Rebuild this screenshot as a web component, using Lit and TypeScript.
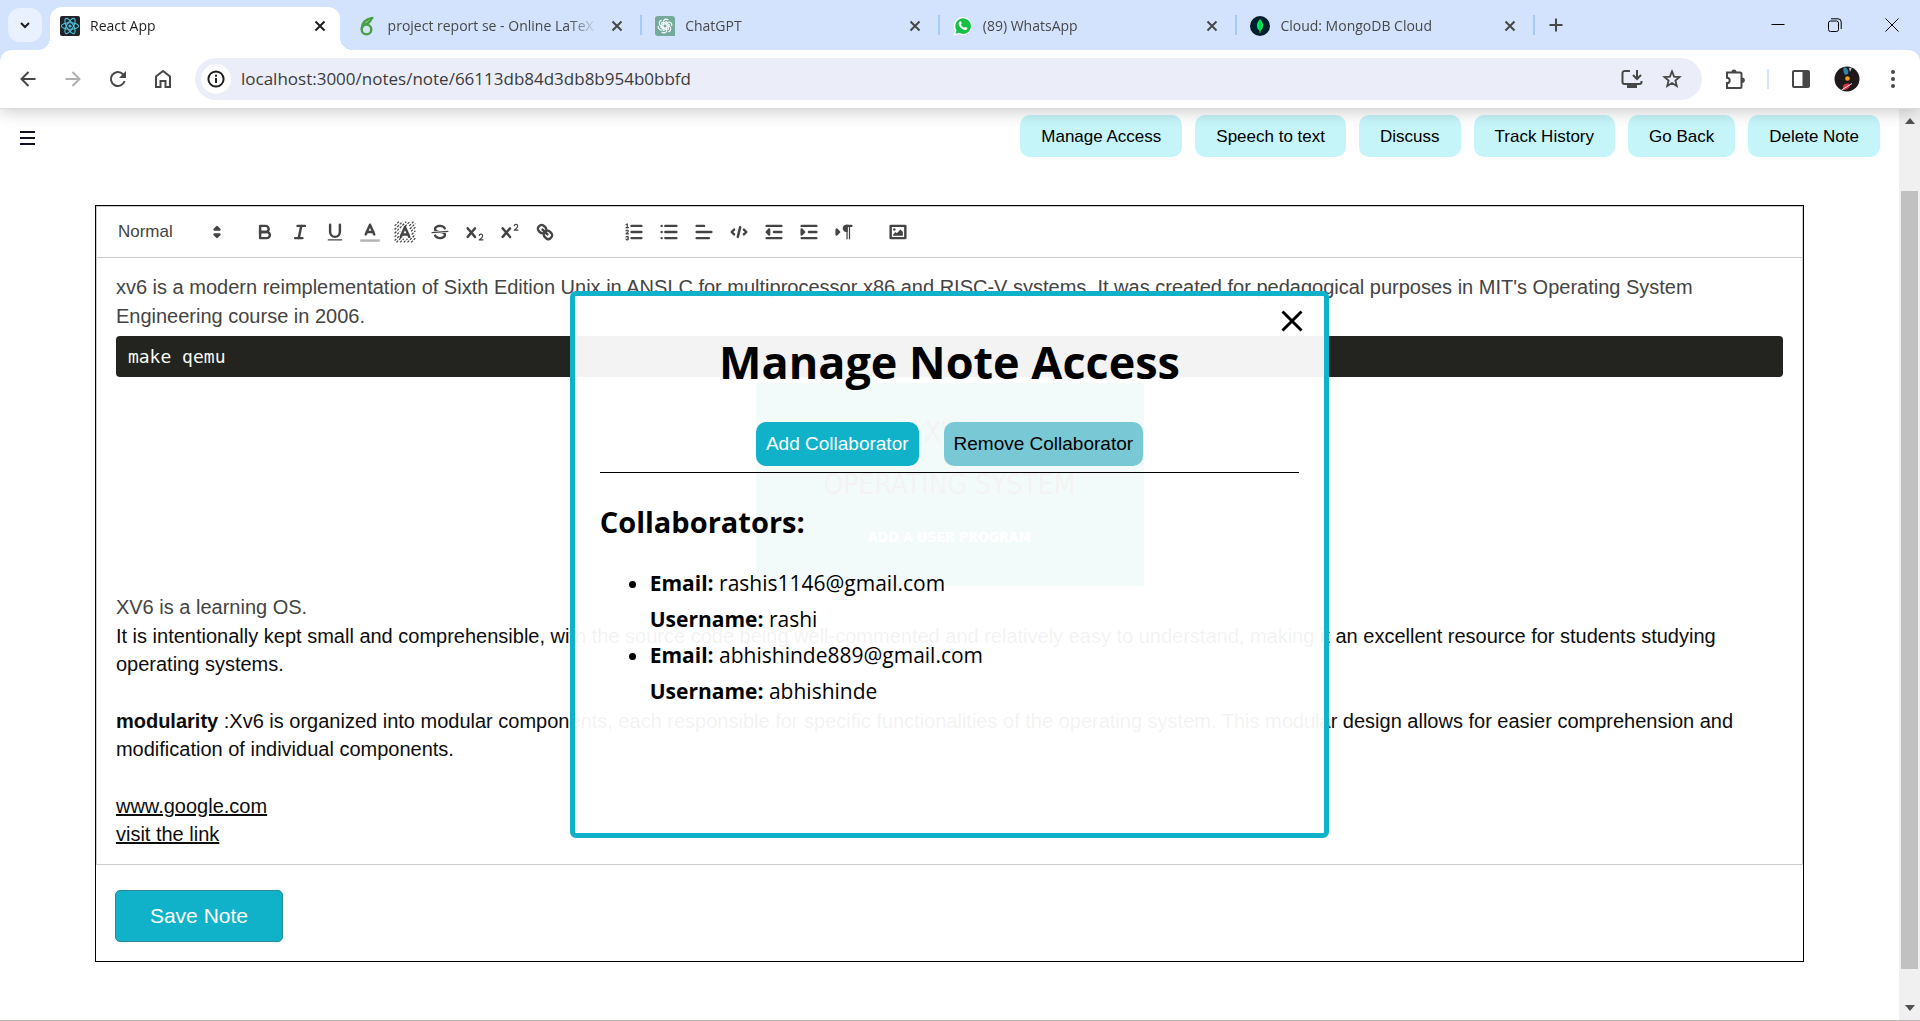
import { LitElement, html, svg, css, SVGTemplateResult } from "lit";
import { customElement, property } from "lit/decorators.js";
import { classMap } from "lit/directives/class-map.js";

const line = (x1: number, y1: number, x2: number, y2: number, cls = "stroke") =>
  svg`<line class=${cls} x1=${x1} y1=${y1} x2=${x2} y2=${y2}></line>`;

/* ---------- browser chrome ---------- */

interface Tab {
  title: string;
  icon: string;
  active?: boolean;
}

const TABS: Tab[] = [
  { title: "React App", icon: "react", active: true },
  { title: "project report se - Online LaTeX", icon: "overleaf" },
  { title: "ChatGPT", icon: "gpt" },
  { title: "(89) WhatsApp", icon: "whatsapp" },
  { title: "Cloud: MongoDB Cloud", icon: "mongo" },
];

const FAVICONS: Record<string, SVGTemplateResult> = {
  react: svg`
    <rect width="20" height="20" rx="2" fill="#20232a"></rect>
    <g fill="none" stroke="#4fc3dc" stroke-width="1.1">
      <ellipse cx="10" cy="10" rx="8.6" ry="3.3"></ellipse>
      <ellipse cx="10" cy="10" rx="8.6" ry="3.3" transform="rotate(60 10 10)"></ellipse>
      <ellipse cx="10" cy="10" rx="8.6" ry="3.3" transform="rotate(120 10 10)"></ellipse>
    </g>
    <circle cx="10" cy="10" r="1.6" fill="#4fc3dc"></circle>`,
  overleaf: svg`
    <g fill="none" stroke="#47a141" stroke-width="2.4" stroke-linecap="round">
      <circle cx="8.5" cy="13.4" r="4.8"></circle>
      <path d="M3.8 12.4 C4 7 7.5 3.4 14.4 2"></path>
      <path d="M6.8 8.4 C9.5 7.6 12 6.2 13.2 3"></path>
    </g>`,
  gpt: svg`
    <path d="M3 0 H17 A3 3 0 0 1 20 3 V20 H3 A3 3 0 0 1 0 17 V3 A3 3 0 0 1 3 0Z" fill="#74aa9c"></path>
    <g fill="none" stroke="#fff" stroke-width="1.1">
      ${[0, 60, 120, 180, 240, 300].map(
        (a) => svg`<path transform="rotate(${a} 10 10)" d="M8 10.9 V6.2 A3.1 3.1 0 0 1 13.4 4.2 M8 7.4 L11.8 5.2"></path>`
      )}
    </g>`,
  whatsapp: svg`
    <path d="M0.8 19.4 L2.2 14.6 A9 9 0 1 1 5.6 18 Z" fill="#fff"></path>
    <path d="M2.4 17.8 L3.5 14.2 A7.8 7.8 0 1 1 6 16.7 Z" fill="#12c143"></path>
    <path d="M7 5.2 C7.6 5 8 5.2 8.2 5.8 L8.8 7.3 C8.9 7.8 8.2 8.3 8 8.7 C8.6 10.1 9.8 11.2 11.3 11.8 C11.7 11.5 12.1 10.8 12.6 10.9 L14.1 11.7 C14.6 12 14.4 13 13.8 13.5 C12.9 14.2 11.6 14.1 10.4 13.6 C8.4 12.7 6.7 11.1 5.9 9.2 C5.3 7.8 5.6 6 7 5.2Z" fill="#fff"></path>`,
  mongo: svg`
    <circle cx="10" cy="10" r="10" fill="#001e2b"></circle>
    <path d="M10 3 C12.4 5.5 13.4 8 13 10.6 C12.7 12.8 11.6 14 10.4 15 L10.2 17 H9.8 L9.6 15 C8.4 14 7.3 12.8 7 10.6 C6.6 8 7.6 5.5 10 3Z" fill="#00ed64"></path>
    <path d="M10 5 V17" stroke="#00a848" stroke-width="0.8"></path>`,
};

@customElement("browser-chrome")
class BrowserChrome extends LitElement {
  static styles = css`
    :host {
      display: block;
      position: relative;
      z-index: 5;
      font-family: "Open Sans", "Noto Sans", sans-serif;
      color: #1f1f1f;
      box-shadow: 0 2px 16px rgba(0, 0, 0, 0.22);
      border-bottom: 1px solid #dcdcdc;
      background: #d3e3fd;
    }
    button {
      border: 0;
      background: none;
      padding: 0;
      margin: 0;
      display: grid;
      place-items: center;
      color: inherit;
      flex: none;
    }
    svg {
      display: block;
      fill: none;
      stroke: currentColor;
      stroke-width: 2;
    }
    .strip {
      display: flex;
      align-items: flex-end;
      height: 50px;
    }
    .search {
      width: 34px;
      height: 34px;
      margin: 8px;
      border-radius: 12px;
      background: #e9f1fe;
    }
    .tabs {
      display: flex;
      flex: 0 1 1488px;
      min-width: 0;
      height: 43px;
    }
    .tab {
      position: relative;
      flex: 1;
      min-width: 0;
      box-sizing: border-box;
      display: flex;
      align-items: center;
      gap: 10px;
      margin-right: 8px;
      padding: 0 10px 6px;
      color: #474747;
    }
    .tab.active {
      background: #fff;
      border-radius: 12px 12px 0 0;
      color: #1f1f1f;
    }
    .tab.active::before,
    .tab.active::after {
      content: "";
      position: absolute;
      bottom: 0;
      width: 12px;
      height: 12px;
    }
    .tab.active::before {
      right: 100%;
      background: radial-gradient(circle at 0 0, transparent 12px, #fff 12px);
    }
    .tab.active::after {
      left: 100%;
      background: radial-gradient(circle at 100% 0, transparent 12px, #fff 12px);
    }
    .divided::after {
      content: "";
      position: absolute;
      right: -5px;
      top: 8px;
      width: 2px;
      height: 20px;
      background: #a8c7fa;
    }
    .favicon {
      flex: none;
      stroke: none;
    }
    .title {
      flex: 1;
      overflow: hidden;
      white-space: nowrap;
      font-size: 14px;
      line-height: 20px;
      -webkit-mask-image: linear-gradient(to left, transparent, #000 28px);
      mask-image: linear-gradient(to left, transparent, #000 28px);
    }
    .close {
      width: 20px;
      height: 20px;
    }
    .plus {
      width: 28px;
      height: 28px;
      margin: 0 0 11px 4px;
      color: #474747;
    }
    .window {
      display: flex;
      margin-left: auto;
    }
    .window button {
      width: 57px;
      height: 50px;
    }
    .window svg {
      stroke-width: 1;
      stroke: #000;
    }
    .bar {
      display: flex;
      align-items: center;
      height: 58px;
      padding: 0 11px 0 8px;
      background: #fff;
      border-radius: 12px 12px 0 0;
      color: #474747;
    }
    .bar .nav {
      width: 40px;
      height: 40px;
      margin-right: 5px;
    }
    .bar .nav.off {
      color: #b0b0b0;
    }
    .address {
      flex: 1;
      display: flex;
      align-items: center;
      height: 42px;
      margin: 0 17px 0 7px;
      border-radius: 21px;
      background: #ebeef8;
      padding: 0 10px 0 6px;
    }
    .info {
      width: 30px;
      height: 30px;
      border-radius: 15px;
      background: #fff;
      color: #1f1f1f;
    }
    .address input {
      flex: 1;
      min-width: 0;
      border: 0;
      outline: 0;
      background: none;
      padding: 0 10px;
      font: 17px/24px "Open Sans", "Noto Sans", sans-serif;
      color: #3a3b40;
    }
    .address .tool {
      width: 40px;
      height: 40px;
    }
    .tool {
      width: 32px;
      height: 40px;
    }
    .rule {
      width: 2px;
      height: 20px;
      margin: 0 16px;
      background: #d3e3fd;
    }
    .avatar,
    .dots {
      margin-left: 14px;
    }
    .solid {
      fill: currentColor;
      stroke: none;
    }
  `;

  render() {
    return html`
      <div class="strip">
        <button class="search" aria-label="Search tabs">
          <svg width="14" height="14" viewBox="0 0 14 14"><path d="M3 5 L7 9 L11 5"></path></svg>
        </button>
        <div class="tabs" role="tablist">
          ${TABS.map(
            (t, i) => html`<div class=${classMap({ tab: true, active: !!t.active, divided: i > 0 })} role="tab">
              <svg class="favicon" width="20" height="20" viewBox="0 0 20 20">${FAVICONS[t.icon]}</svg>
              <span class="title">${t.title}</span>
              <button class="close" aria-label="Close tab">
                <svg width="12" height="12" viewBox="0 0 12 12"><path d="M1.5 1.5 L10.5 10.5 M10.5 1.5 L1.5 10.5"></path></svg>
              </button>
            </div>`
          )}
        </div>
        <button class="plus" aria-label="New tab">
          <svg width="14" height="14" viewBox="0 0 14 14"><path d="M7 0.5 V13.5 M0.5 7 H13.5"></path></svg>
        </button>
        <div class="window">
          <button aria-label="Minimize"><svg width="14" height="14" viewBox="0 0 14 14"><path d="M0.5 6.5 H13.5"></path></svg></button>
          <button aria-label="Restore">
            <svg width="14" height="14" viewBox="0 0 14 14">
              <rect x="0.5" y="3" width="10" height="10.5" rx="2"></rect>
              <path d="M3 0.8 H10 A3.2 3.2 0 0 1 13.2 4 V11"></path>
            </svg>
          </button>
          <button aria-label="Close"><svg width="14" height="14" viewBox="0 0 14 14"><path d="M0.5 0.5 L13.5 13.5 M13.5 0.5 L0.5 13.5"></path></svg></button>
        </div>
      </div>
      <div class="bar">
        <button class="nav" aria-label="Back">
          <svg width="16" height="16" viewBox="0 0 16 16"><path d="M15.5 8 H2 M8.5 1 L1.5 8 L8.5 15"></path></svg>
        </button>
        <button class="nav off" aria-label="Forward">
          <svg width="16" height="16" viewBox="0 0 16 16"><path d="M0.5 8 H14 M7.5 1 L14.5 8 L7.5 15"></path></svg>
        </button>
        <button class="nav" aria-label="Reload">
          <svg width="18" height="18" viewBox="0 0 18 18">
            <path d="M15.6 11 A7 7 0 1 1 14 4.2 L16 6"></path>
            <path class="solid" d="M17 1 V8 H10 Z"></path>
          </svg>
        </button>
        <button class="nav" aria-label="Home">
          <svg width="18" height="20" viewBox="0 0 18 20"><path d="M2 18 V7.5 L9 2 L16 7.5 V18 H11.5 V12 H6.5 V18 Z"></path></svg>
        </button>
        <div class="address">
          <button class="info" aria-label="Site information">
            <svg width="18" height="18" viewBox="0 0 18 18">
              <circle cx="9" cy="9" r="7.6"></circle>
              <path d="M9 8 V13 M9 4.8 V6.8"></path>
            </svg>
          </button>
          <input type="text" aria-label="Address" value="localhost:3000/notes/note/66113db84d3db8b954b0bbfd" />
          <button class="tool" aria-label="Install app">
            <svg width="22" height="20" viewBox="0 0 22 20">
              <path d="M9 2 H3.5 A2 2 0 0 0 1.5 4 V13 A2 2 0 0 0 3.5 15 H18.5 A2 2 0 0 0 20.5 13 V12"></path>
              <path d="M16 1 V9.5 M12 6 L16 10 L20 6"></path>
              <path class="solid" d="M6 15 H16 V19 H6 Z"></path>
            </svg>
          </button>
          <button class="tool" aria-label="Bookmark">
            <svg width="20" height="20" viewBox="0 0 20 20">
              <path stroke-width="1.8" d="M10 2.4 L12.1 7.6 L17.6 8 L13.4 11.6 L14.8 17 L10 14 L5.2 17 L6.6 11.6 L2.4 8 L7.9 7.6 Z"></path>
            </svg>
          </button>
        </div>
        <button class="tool" aria-label="Extensions">
          <svg width="22" height="22" viewBox="0 0 22 22">
            <path d="M3 4.5 H16 A1.5 1.5 0 0 1 17.5 6 V18.5 A1.5 1.5 0 0 1 16 20 H3 V15 C6.6 15 6.6 9.8 3 9.8 Z"></path>
            <path class="solid" d="M7.4 4.5 A2.6 3 0 0 1 12.6 4.5Z M17.8 9.5 A3 2.7 0 0 1 17.8 15Z"></path>
          </svg>
        </button>
        <span class="rule"></span>
        <button class="tool" aria-label="Side panel">
          <svg width="20" height="20" viewBox="0 0 20 20">
            <rect x="2" y="2" width="16" height="16" rx="1"></rect>
            <rect class="solid" x="11.5" y="2" width="6.5" height="16"></rect>
          </svg>
        </button>
        <button class="tool avatar" aria-label="Profile">
          <svg width="26" height="26" viewBox="0 0 26 26">
            <g stroke="none">
              <circle cx="13" cy="13" r="12.5" fill="#20191c"></circle>
              <path d="M10 1 C13 2 15 4 14 8 L11 9 C9 6 9 3 10 1Z" fill="#2d86a8"></path>
              <path d="M15 2 L18 1.6 L16 6Z" fill="#c8d4d8"></path>
              <circle cx="13.5" cy="12.5" r="2.3" fill="#f0a11c"></circle>
              <path d="M9 20 C11 17 15 17 16 19 C16 22 12 24 9 24Z" fill="#e03348"></path>
            </g>
            <path d="M7.5 24 L18 17.5" stroke="#f2dede" stroke-width="1"></path>
          </svg>
        </button>
        <button class="tool dots" aria-label="Menu">
          <svg width="6" height="20" viewBox="0 0 6 20">
            <g class="solid"><circle cx="3" cy="3" r="2"></circle><circle cx="3" cy="10" r="2"></circle><circle cx="3" cy="17" r="2"></circle></g>
          </svg>
        </button>
      </div>
    `;
  }
}

/* ---------- editor toolbar ---------- */

const CROSS =
  "M9.65,5.241a1,1,0,0,0-1.409.108L6,7.964,3.759,5.349A1,1,0,0,0,2.192,6.592Q2.215,6.621,2.241,6.649L4.684,9.5,2.241,12.35A1,1,0,0,0,3.71,13.707q.026-.028.049-.057L6,11.036,8.241,13.65a1,1,0,1,0,1.567-1.243Q9.785,12.378,9.759,12.35L7.316,9.5,9.759,6.651A1,1,0,0,0,9.65,5.241Z";

const TOOLS: Record<string, SVGTemplateResult> = {
  Bold: svg`<path class="stroke" d="M5,4H9.5A2.5,2.5,0,0,1,12,6.5v0A2.5,2.5,0,0,1,9.5,9H5Z"></path>
    <path class="stroke" d="M5,9h5.5A2.5,2.5,0,0,1,13,11.5v0A2.5,2.5,0,0,1,10.5,14H5Z"></path>`,
  Italic: svg`${line(7, 4, 13, 4)}${line(5, 14, 11, 14)}${line(8, 14, 10, 4)}`,
  Underline: svg`<path class="stroke" d="M5,3V9a4.012,4.012,0,0,0,4,4H9a4.012,4.012,0,0,0,4-4V3"></path>
    <rect class="fill" height="1" rx="0.5" width="12" x="3" y="15"></rect>`,
  "Text color": svg`<line class="stroke faint" x1="1" x2="17" y1="16" y2="16"></line>
    <polyline class="stroke" points="5.5 11 9 3 12.5 11"></polyline>${line(11.63, 9, 6.38, 9)}`,
  "Background color": svg`
    <path class="hatch" d="M0.5 4 L4 0.5 M0.5 7 L7 0.5 M0.5 10 L10 0.5 M0.5 13 L5 8.5 M9 4.5 L13 0.5 M0.5 16 L4.5 12 M12.5 4 L16 0.5 M2 17.5 L6.5 13 M13 6.5 L17.5 2 M5 17.5 L8 14.5 M14 8.5 L17.5 5 M8 17.5 L11 14.5 M14.5 11 L17.5 8 M11 17.5 L17.5 11 M14 17.5 L17.5 14"></path>
    <polyline class="stroke" points="5.5 13 9 5 12.5 13"></polyline>${line(11.63, 11, 6.38, 11)}`,
  Strike: svg`<line class="stroke thin" x1="15.5" x2="2.5" y1="8.5" y2="9.5"></line>
    <path class="fill" d="M9.007,8C6.542,7.791,6,7.519,6,6.5,6,5.792,7.283,5,9,5c1.571,0,2.765.679,2.969,1.309a1,1,0,0,0,1.9-.617C13.356,4.106,11.354,3,9,3,6.2,3,4,4.538,4,6.5a3.2,3.2,0,0,0,.5,1.843Z"></path>
    <path class="fill" d="M8.984,10C11.457,10.208,12,10.479,12,11.5c0,0.708-1.283,1.5-3,1.5-1.571,0-2.765-.679-2.969-1.309a1,1,0,1,0-1.9.617C4.644,13.894,6.646,15,9,15c2.8,0,5-1.538,5-3.5a3.2,3.2,0,0,0-.5-1.843Z"></path>`,
  Subscript: svg`<path class="fill" d="M15.5,15H13.861a3.858,3.858,0,0,0,1.914-2.975,1.8,1.8,0,0,0-1.6-1.751A1.921,1.921,0,0,0,12.021,11.7a.5.5,0,1,0,.957.291h0a.914.914,0,0,1,1.053-.725.81.81,0,0,1,.744.762c0,1.076-1.17,1.87-1.94,2.431A1.456,1.456,0,0,0,12,15.5a.5.5,0,0,0,.5.5h3A.5.5,0,0,0,15.5,15Z"></path>
    <path class="fill" d=${CROSS}></path>`,
  Superscript: svg`<path class="fill" d="M15.5,7H13.861a4.015,4.015,0,0,0,1.914-2.975,1.8,1.8,0,0,0-1.6-1.751A1.922,1.922,0,0,0,12.021,3.7a.5.5,0,1,0,.957.291.917.917,0,0,1,1.053-.725.81.81,0,0,1,.744.762c0,1.077-1.164,1.925-1.934,2.486A1.423,1.423,0,0,0,12,7.5a.5.5,0,0,0,.5.5h3A.5.5,0,0,0,15.5,7Z"></path>
    <path class="fill" d=${CROSS}></path>`,
  Link: svg`${line(7, 7, 11, 11)}
    <path class="stroke" d="M8.9,4.577a3.476,3.476,0,0,1,.36,4.679A3.476,3.476,0,0,1,4.577,8.9C3.185,7.5,2.035,6.4,4.217,4.217S7.5,3.185,8.9,4.577Z"></path>
    <path class="stroke" d="M13.423,9.1a3.476,3.476,0,0,0-4.679-.36,3.476,3.476,0,0,0,.36,4.679c1.392,1.392,2.5,2.542,4.679.36S14.815,10.5,13.423,9.1Z"></path>`,
  "Ordered list": svg`${line(7, 4, 15, 4)}${line(7, 9, 15, 9)}${line(7, 14, 15, 14)}
    <line class="stroke thin" x1="2.5" x2="4.5" y1="5.5" y2="5.5"></line>
    <path class="fill" d="M3.5,6A0.5,0.5,0,0,1,3,5.5V3.085l-0.276.138A0.5,0.5,0,0,1,2.053,3c-0.124-.247-0.023-0.324.224-0.447l1-.5A0.5,0.5,0,0,1,4,2.5v3A0.5,0.5,0,0,1,3.5,6Z"></path>
    <path class="stroke thin" d="M4.5,10.5h-2c0-.234,1.85-1.076,1.85-2.234A0.959,0.959,0,0,0,2.5,8.156"></path>
    <path class="stroke thin" d="M2.5,14.846a0.959,0.959,0,0,0,1.85-.109A0.7,0.7,0,0,0,3.75,14a0.688,0.688,0,0,0,.6-0.736,0.959,0.959,0,0,0-1.85-.109"></path>`,
  "Bullet list": svg`${line(6, 4, 15, 4)}${line(6, 9, 15, 9)}${line(6, 14, 15, 14)}
    ${line(3, 4, 3, 4)}${line(3, 9, 3, 9)}${line(3, 14, 3, 14)}`,
  Align: svg`${line(3, 9, 15, 9)}${line(3, 14, 13, 14)}${line(3, 4, 9, 4)}`,
  "Code block": svg`<polyline class="stroke" points="5 7 3 9 5 11"></polyline>
    <polyline class="stroke" points="13 7 15 9 13 11"></polyline>${line(10, 5, 8, 13)}`,
  Outdent: svg`${line(3, 14, 15, 14)}${line(3, 4, 15, 4)}${line(9, 9, 15, 9)}
    <polyline class="stroke fill" points="5 7 5 11 3 9 5 7"></polyline>`,
  Indent: svg`${line(3, 14, 15, 14)}${line(3, 4, 15, 4)}${line(9, 9, 15, 9)}
    <polyline class="stroke fill" points="3 7 3 11 5 9 3 7"></polyline>`,
  Direction: svg`<polygon class="stroke fill" points="3 11 5 9 3 7 3 11"></polygon>
    <line class="stroke" x1="15" x2="11" y1="4" y2="4"></line>
    <path class="fill" d="M11,3a3,3,0,0,0,0,6h1V3H11Z"></path>
    <rect class="fill" height="11" width="1" x="11" y="4"></rect>
    <rect class="fill" height="11" width="1" x="13" y="4"></rect>`,
  Image: svg`<rect class="stroke" height="10" width="12" x="3" y="4"></rect>
    <circle class="fill" cx="6" cy="7" r="1"></circle>
    <polyline class="fill" points="5 12 5 11 7 9 8 10 11 7 13 9 13 12 5 12"></polyline>`,
};

const GROUPS = [
  ["Bold", "Italic", "Underline", "Text color", "Background color", "Strike", "Subscript", "Superscript", "Link"],
  ["Ordered list", "Bullet list", "Align", "Code block", "Outdent", "Indent", "Direction"],
  ["Image"],
];

@customElement("editor-toolbar")
class EditorToolbar extends LitElement {
  static styles = css`
    :host {
      display: flex;
      align-items: center;
      flex-wrap: wrap;
      min-height: 52px;
      padding: 0 10px;
      border: 1px solid #ccc;
      box-sizing: border-box;
      color: #444;
    }
    .picker {
      position: relative;
      width: 122px;
      height: 30px;
      margin-right: 19px;
    }
    select {
      appearance: none;
      width: 100%;
      height: 30px;
      border: 0;
      background: none;
      padding: 0 11px;
      margin: 0;
      font: 17px/24px "Liberation Sans", Arial, sans-serif;
      color: #444;
    }
    .picker svg {
      position: absolute;
      right: 1px;
      top: 4px;
      pointer-events: none;
    }
    .group {
      display: flex;
      margin-right: 19px;
    }
    .wide {
      margin-right: 54px;
    }
    button {
      width: 35px;
      height: 30px;
      border: 0;
      padding: 0;
      background: none;
      display: grid;
      place-items: center;
    }
    svg {
      width: 22px;
      height: 22px;
      display: block;
    }
    .stroke {
      fill: none;
      stroke: #444;
      stroke-width: 2;
      stroke-linecap: round;
      stroke-linejoin: round;
    }
    .fill {
      fill: #444;
    }
    .thin {
      stroke-width: 1;
    }
    .faint {
      opacity: 0.4;
      stroke-linecap: butt;
    }
    .hatch {
      fill: none;
      stroke: #444;
      stroke-width: 1;
      stroke-dasharray: 2 1;
    }
  `;

  render() {
    return html`
      <div class="picker">
        <select aria-label="Text style">
          <option>Normal</option>
          <option>Heading 1</option>
          <option>Heading 2</option>
        </select>
        <svg viewBox="0 0 18 18">
          <polygon class="stroke fill" points="7 11 9 13 11 11 7 11"></polygon>
          <polygon class="stroke fill" points="7 7 9 5 11 7 7 7"></polygon>
        </svg>
      </div>
      ${GROUPS.map(
        (names, i) => html`<div class=${classMap({ group: true, wide: i === 0 })}>
          ${names.map((n) => html`<button aria-label=${n}><svg viewBox="0 0 18 18">${TOOLS[n]}</svg></button>`)}
        </div>`
      )}
    `;
  }
}

/* ---------- access dialog ---------- */

interface Person {
  email: string;
  username: string;
}

@customElement("access-dialog")
class AccessDialog extends LitElement {
  @property({ attribute: false }) people: Person[] = [];

  static styles = css`
    :host {
      position: relative;
      display: block;
      box-sizing: border-box;
      width: 40%;
      min-height: 60%;
      padding: 36px 25px;
      border: 5px solid #10b2c9;
      border-radius: 6px;
      background: rgba(255, 255, 255, 0.95);
      color: #000;
      font-family: "Open Sans", "Noto Sans", sans-serif;
    }
    .close {
      position: absolute;
      top: 12px;
      right: 19px;
      width: 26px;
      height: 26px;
      border: 0;
      padding: 0;
      background: none;
      display: grid;
      place-items: center;
    }
    .close svg {
      fill: none;
      stroke: #000;
      stroke-width: 3;
    }
    h1 {
      margin: 0 0 30px;
      font-size: 45px;
      line-height: 60px;
      font-weight: 700;
      text-align: center;
    }
    .actions {
      display: flex;
      justify-content: center;
      gap: 25px;
      padding-bottom: 6px;
      border-bottom: 1px solid #000;
    }
    .actions button {
      height: 44px;
      padding: 0 10px;
      border: 0;
      border-radius: 10px;
      font: 19px/24px "Liberation Sans", Arial, sans-serif;
      background: #78c9d5;
      color: #000;
    }
    .actions .primary {
      background: #10b2c9;
      color: #fff;
    }
    h2 {
      margin: 29px 0 23px;
      font-size: 29px;
      line-height: 40px;
      font-weight: 700;
    }
    ul {
      margin: 0;
      padding-left: 50px;
      font-size: 21px;
      line-height: 36px;
    }
  `;

  render() {
    return html`
      <button class="close" aria-label="Close dialog">
        <svg width="22" height="22" viewBox="0 0 22 22"><path d="M1.5 1.5 L20.5 20.5 M20.5 1.5 L1.5 20.5"></path></svg>
      </button>
      <h1>Manage Note Access</h1>
      <div class="actions">
        <button class="primary">Add Collaborator</button>
        <button>Remove Collaborator</button>
      </div>
      <h2>Collaborators:</h2>
      <ul>
        ${this.people.map(
          (p) => html`<li><strong>Email:</strong> ${p.email}<br /><strong>Username:</strong> ${p.username}</li>`
        )}
      </ul>
    `;
  }
}

/* ---------- page ---------- */

const ACTIONS = ["Manage Access", "Speech to text", "Discuss", "Track History", "Go Back", "Delete Note"];

const PEOPLE: Person[] = [
  { email: "rashis1146@gmail.com", username: "rashi" },
  { email: "abhishinde889@gmail.com", username: "abhishinde" },
];

@customElement("app-root")
class AppRoot extends LitElement {
  static styles = css`
    :host {
      display: flex;
      flex-direction: column;
      min-height: 100vh;
      background: #fff;
      font-family: "Liberation Sans", Arial, sans-serif;
      box-sizing: border-box;
      border-bottom: 1px solid #bdb5ac;
    }
    .viewport {
      flex: 1;
      display: flex;
    }
    .page {
      position: relative;
      flex: 1;
      min-width: 0;
    }
    .topbar {
      display: flex;
      align-items: center;
      justify-content: space-between;
      padding: 6px 19px 0 20px;
    }
    .burger {
      border: 0;
      padding: 4px 0 0;
      background: none;
    }
    .burger svg {
      display: block;
    }
    .actions {
      display: flex;
      gap: 13px;
    }
    .actions button {
      height: 42px;
      padding: 1px 21px 0;
      border: 0;
      border-radius: 10px;
      background: #c5f4f9;
      color: #000;
      font: 17px/24px "Liberation Sans", Arial, sans-serif;
    }
    .note {
      margin: 48px 5% 0;
      border: 1px solid #000;
    }
    .body {
      border: 1px solid #ccc;
      border-top: 0;
      padding: 15px 19px 16px;
      font-size: 20px;
      line-height: 28px;
      color: #0d0d0d;
    }
    .body p {
      margin: 0;
    }
    .body .lead {
      line-height: 29px;
      color: #444;
    }
    .blank {
      height: 29px;
    }
    .body a {
      color: #0d0d0d;
      text-decoration: underline;
    }
    pre {
      margin: 5px 0 6px;
      padding: 7px 12px 6px;
      border-radius: 4px;
      background: #23241f;
      color: #f8f8f2;
      font: 18px/28px "DejaVu Sans Mono", monospace;
    }
    .video {
      display: flex;
      flex-direction: column;
      align-items: center;
      justify-content: center;
      box-sizing: border-box;
      width: 388px;
      height: 203px;
      margin: 0 auto 7px;
      background: #12b49c;
      color: #40101c;
      font-family: "DejaVu Sans Condensed", "DejaVu Sans", sans-serif;
      font-size: 28px;
      line-height: 52px;
    }
    .video strong {
      font-size: 14px;
      color: #fff;
    }
    .footer {
      padding: 25px 19px 19px;
    }
    .save {
      height: 52px;
      padding: 0 34px;
      border: 1px solid #2b8a98;
      border-radius: 5px;
      background: #10b2c9;
      color: #fff;
      font: 21px/24px "Liberation Sans", Arial, sans-serif;
    }
    .overlay {
      position: absolute;
      inset: 0;
      display: flex;
      align-items: center;
      justify-content: center;
    }
    .scrollbar {
      width: 21px;
      display: flex;
      flex-direction: column;
      align-items: center;
      box-sizing: border-box;
      padding: 8px 0;
      background: #f0f0f0;
    }
    .scrollbar svg {
      display: block;
      fill: #505050;
    }
    .thumb {
      width: 17px;
      flex: 778;
      background: #c1c1c1;
    }
    .before {
      flex: 66;
    }
    .after {
      flex: 35;
    }
  `;

  render() {
    return html`
      <browser-chrome></browser-chrome>
      <div class="viewport">
        <main class="page">
          <div class="topbar">
            <button class="burger" aria-label="Menu">
              <svg width="16" height="16" viewBox="0 0 16 16" stroke="#101020" stroke-width="2">
                <path d="M0 2 H15 M0 8 H15 M0 14 H15"></path>
              </svg>
            </button>
            <div class="actions">${ACTIONS.map((a) => html`<button>${a}</button>`)}</div>
          </div>
          <section class="note">
            <editor-toolbar></editor-toolbar>
            <div class="body">
              <p class="lead">
                xv6 is a modern reimplementation of Sixth Edition Unix in ANSI C for multiprocessor x86 and RISC-V
                systems. It was created for pedagogical purposes in MIT's Operating System Engineering course in 2006.
              </p>
              <pre>make qemu</pre>
              <div class="video">
                <span>XV6</span>
                <span>OPERATING SYSTEM</span>
                <strong>ADD A USER PROGRAM</strong>
              </div>
              <p class="lead">XV6 is a learning OS.</p>
              <p>
                It is intentionally kept small and comprehensible, with the source code being well-commented and
                relatively easy to understand, making it an excellent resource for students studying operating systems.
              </p>
              <div class="blank"></div>
              <p>
                <strong>modularity</strong> :Xv6 is organized into modular components, each responsible for specific
                functionalities of the operating system. This modular design allows for easier comprehension and
                modification of individual components.
              </p>
              <div class="blank"></div>
              <p><a href="#google">www.google.com</a></p>
              <p><a href="#visit">visit the link</a></p>
            </div>
            <div class="footer"><button class="save">Save Note</button></div>
          </section>
          <div class="overlay"><access-dialog .people=${PEOPLE}></access-dialog></div>
        </main>
        <div class="scrollbar">
          <svg width="10" height="8" viewBox="0 0 10 8"><path d="M0 7 L5 1 L10 7Z"></path></svg>
          <span class="before"></span>
          <span class="thumb"></span>
          <span class="after"></span>
          <svg width="10" height="8" viewBox="0 0 10 8"><path d="M0 1 L5 7 L10 1Z"></path></svg>
        </div>
      </div>
    `;
  }
}
